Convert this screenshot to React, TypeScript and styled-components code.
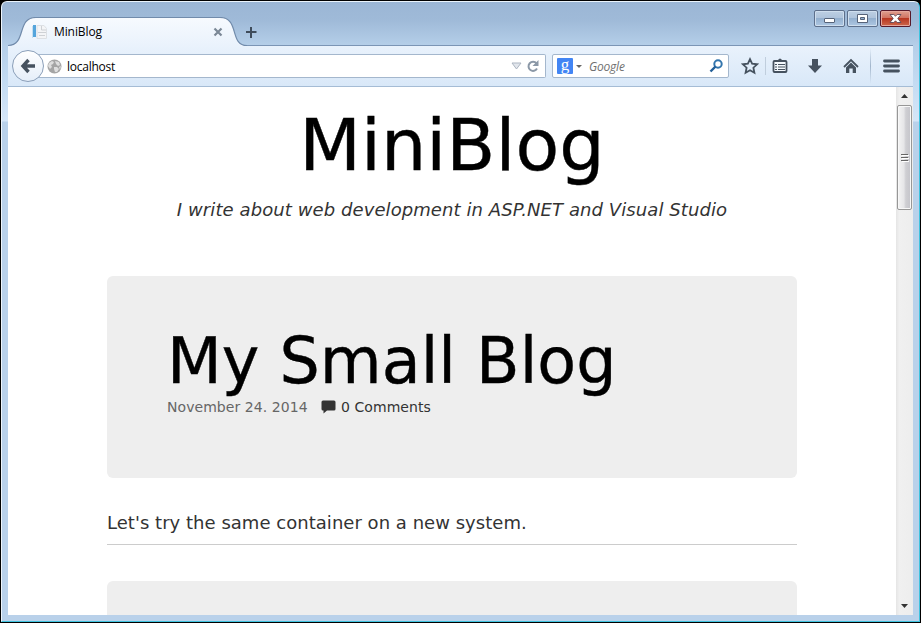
import React from 'react';
import styled, { createGlobalStyle } from 'styled-components';

const GlobalStyle = createGlobalStyle`
  * { box-sizing: border-box; }
  html, body { margin: 0; padding: 0; overflow: hidden; background: #000; }
  svg { display: block; flex: none; }
`;

const Desktop = styled.div`
  width: 921px;
  height: 623px;
  padding: 1px;
  background: #000;
`;

const Window = styled.div`
  width: 919px;
  height: 621px;
  display: flex;
  flex-direction: column;
  padding: 0 6px 6px;
  border: 1px solid #3fc3df;
  border-top-color: #eaf3fb;
  border-left-color: #eef5fc;
  border-radius: 6px 6px 0 0;
  background: linear-gradient(#9bb6d5 0, #9fbad8 18px, #b5cfe9 44px, #c3dbf2 80px, #d5e6f8 119px, #b9d1ea 120px, #b9d1ea 100%);
  font-family: 'Open Sans', 'Noto Sans', sans-serif;
`;

const TitleBar = styled.header`
  height: 44px;
  flex: none;
  display: flex;
  border-bottom: 1px solid #7b95b5;
`;

const Tab = styled.div`
  position: relative;
  width: 238px;
  height: 44px;
  padding: 16px 0 0 24px;
  display: flex;
`;

const TabShape = styled.svg`
  position: absolute;
  left: 0;
  top: 15px;
`;

const TabContent = styled.div`
  position: relative;
  width: 191px;
  height: 28px;
  display: flex;
  align-items: center;
`;

const TabTitle = styled.span`
  flex: 1;
  margin-left: 6px;
  font-size: 12px;
  line-height: 16px;
  letter-spacing: -0.1px;
  color: #000;
`;

const NewTab = styled.div`
  padding: 25px 0 0 0;
  flex: 1;
`;

const WindowControls = styled.div`
  display: flex;
  gap: 2px;
  padding: 8px 2px 0 0;
`;

const ControlButton = styled.div<{ $danger?: boolean }>`
  width: 31px;
  height: 17px;
  display: flex;
  align-items: center;
  justify-content: center;
  border: 1px solid ${p => (p.$danger ? '#57192a' : '#5d6f8b')};
  border-radius: 2px;
  box-shadow: inset 0 0 0 1px ${p => (p.$danger ? '#e5a79d' : '#cfdeee')};
  background: ${p => p.$danger
    ? 'linear-gradient(#dfa090 0, #d0705f 48%, #b83722 50%, #cd674b 100%)'
    : 'linear-gradient(#bdcfe3 0, #aec3db 48%, #94b0cf 50%, #adc7e2 100%)'};
`;

const Toolbar = styled.nav`
  height: 41px;
  flex: none;
  display: flex;
  align-items: center;
  border-bottom: 1px solid #a5bcd5;
  background: linear-gradient(#e9f2fc, #d9e8f8);
`;

const BackButton = styled.div`
  position: relative;
  z-index: 1;
  width: 32px;
  height: 32px;
  margin-left: 4px;
  flex: none;
  display: flex;
  align-items: center;
  justify-content: center;
  border: 1px solid #8b9fb9;
  border-radius: 50%;
  background: linear-gradient(#fff, #e5eef9);
`;

const Field = styled.div<{ $width: number }>`
  width: ${p => p.$width}px;
  height: 24px;
  flex: none;
  display: flex;
  align-items: center;
  border: 1px solid #a4b7cd;
  border-radius: 2px;
  background: #fff;
`;

const AddressField = styled(Field)`
  margin-left: -6px;
  margin-right: 6px;
  padding: 0 5px 0 9px;
  border-left: 0;
  border-radius: 0 2px 2px 0;
`;

const SearchField = styled(Field)`
  padding: 0 5px 0 4px;
`;

const Address = styled.span`
  flex: 1;
  margin-left: 5px;
  padding-top: 2px;
  font-size: 12px;
  line-height: 16px;
  letter-spacing: -0.25px;
`;

const Engine = styled.span`
  width: 16px;
  height: 16px;
  display: flex;
  align-items: center;
  justify-content: center;
  border-radius: 1px;
  background: #4285f4;
  color: #fff;
  font: 17px/14px 'Liberation Serif', serif;
  padding-bottom: 3px;
`;

const Placeholder = styled.span`
  flex: 1;
  margin-left: 7px;
  padding-top: 2px;
  color: #707070;
  font-size: 12px;
  line-height: 16px;
  font-style: italic;
  letter-spacing: -0.2px;
`;

const Actions = styled.div`
  display: flex;
  align-items: center;
  margin-left: 12px;
`;

const Action = styled.div<{ $width: number }>`
  width: ${p => p.$width}px;
`;

const Divider = styled.div<{ $tall?: boolean }>`
  width: 1px;
  height: ${p => (p.$tall ? 36 : 18)}px;
  margin-right: ${p => (p.$tall ? 12 : 6)}px;
  background: ${p => (p.$tall ? 'linear-gradient(transparent, #a1b5cb, transparent)' : '#c0cedd')};
`;

const Viewport = styled.div`
  flex: 1;
  min-height: 0;
  display: flex;
  background: #fff;
`;

const Page = styled.main`
  flex: 1;
  height: 528px;
  overflow: hidden;
  padding: 0 99px 0 99px;
  font-family: 'DejaVu Sans', Verdana, sans-serif;
  color: #333;
`;

const SiteHeader = styled.header`
  height: 189px;
  text-align: center;
  white-space: nowrap;
`;

const SiteTitle = styled.h1`
  margin: 0;
  padding-top: 17px;
  font-size: 71.5px;
  line-height: 84px;
  font-weight: 400;
  letter-spacing: 0.1px;
  color: #000;
  -webkit-text-stroke: 0.4px #000;
`;

const Tagline = styled.p`
  margin: 10px 0 0;
  font-size: 18px;
  line-height: 24px;
  font-style: italic;
  letter-spacing: 0.085px;
`;

const Card = styled.section`
  height: 202px;
  padding: 49px 60px 0;
  border-radius: 6px;
  background: #eee;
`;

const PostTitle = styled.h2`
  margin: 0;
  font-size: 63.5px;
  line-height: 73px;
  font-weight: 400;
  letter-spacing: 0;
  white-space: nowrap;
  color: #000;
  -webkit-text-stroke: 0.4px #000;
`;

const Meta = styled.div`
  display: flex;
  align-items: center;
  height: 18px;
  font-size: 14px;
  line-height: 18px;
  letter-spacing: 0.06px;
`;

const PostDate = styled.time`
  width: 154px;
  color: #666;
`;

const Comments = styled.span`
  margin-left: 5px;
`;

const Excerpt = styled.p`
  height: 67px;
  margin: 0 0 36px;
  padding-top: 33px;
  font-size: 18px;
  line-height: 24px;
  letter-spacing: 0.03px;
  border-bottom: 1px solid #ccc;
`;

const ScrollBar = styled.aside`
  width: 17px;
  height: 528px;
  display: flex;
  flex-direction: column;
  align-items: flex-start;
  background: linear-gradient(90deg, #e5e5e5, #f0f0f0 20%, #ededed);
`;

const ScrollArrow = styled.div`
  width: 17px;
  height: 18px;
  flex: none;
  display: flex;
  align-items: center;
  justify-content: center;
`;

const Thumb = styled.div`
  width: 15px;
  height: 105px;
  margin-left: 1px;
  display: flex;
  flex: none;
  align-items: center;
  justify-content: center;
  border: 1px solid #979797;
  border-radius: 2px;
  box-shadow: inset 0 0 0 1px #f8f8f8;
  background: linear-gradient(90deg, #f4f4f4 0, #e6e6e8 45%, #cfcfd3 60%, #c4c4ca 100%);
`;

const Spacer = styled.div`
  flex: 1;
`;

const ink = '#46525f';

const PageIcon = () => (
  <svg width="16" height="16" viewBox="0 0 16 16">
    <path d="M5 1.500h7l2.500 3v10H5z" fill="#f4f5f7" stroke="#dde0e4" />
    <path d="M9.500 2v4h4.500M6 8.500h8M7 11.500h6" fill="none" stroke="#ced1d5" />
    <path d="M1 1h3v12H1z" fill="#55a5dc" /><path d="M0 2h1v12H0z" fill="#c4e0f2" />
  </svg>
);

const GlobeIcon = () => (
  <svg width="15" height="15" viewBox="0 0 15 15">
    <circle cx="7.5" cy="7.5" r="7" fill="#a5a5a5" />
    <path d="M2 4l3-2 2 1-1 2-2 1 1 2-2 2-2-3zM8 2l4 1 1 3-2 1-2-2zM7 8l3 0 2 2-2 3-2 0-1-3zM12 8l2-1-1 4z" fill="#dedede" />
  </svg>
);

const MinimizeIcon = () => (
  <svg width="13" height="13"><rect x="1.5" y="6.5" width="10" height="4" rx=".5" fill="#fff" stroke="#566379" /></svg>
);
const MaximizeIcon = () => (
  <svg width="13" height="13"><path d="M1.5 2.5h10v8h-10zM4.5 5.5v2h4v-2z" fillRule="evenodd" fill="#fff" stroke="#566379" /></svg>
);
const CloseIcon = () => (
  <svg width="13" height="13"><path d="M1 2.500h3.800l1.700 1.700 1.700-1.700H12L8.800 6.500l3.200 4H8.200L6.500 8.800l-1.700 1.700H1l3.200-4z" fill="#fff" stroke="#5e4857" strokeWidth=".9" /></svg>
);

const StarIcon = () => (
  <svg width="18" height="18"><path d="M9 2.200l2.100 4.500 5 .6-3.700 3.400 1 5L9 13.200l-4.400 2.500 1-5-3.700-3.400 5-.6z" fill="none" stroke={ink} strokeWidth="1.8" /></svg>
);
const ListIcon = () => (
  <svg width="16" height="18">
    <path d="M2.500 4h11q1 0 1 1v9q0 1-1 1h-11q-1 0-1-1V5q0-1 1-1z" fill="#f3f8fd" stroke={ink} strokeWidth="1.800" />
    <path d="M4 5V3.500l2-.5q2-3 4 0l2 .5V5z" fill={ink} />
    <path d="M3 7.500h2M3 10h2M3 12.500h2M6 7.500h7M6 10h7M6 12.500h7" stroke={ink} strokeWidth="1.2" />
  </svg>
);
const DownloadIcon = () => (
  <svg width="16" height="18"><path d="M5 2h6v6.500h4L8 16 1 8.500h4z" fill={ink} /></svg>
);
const HomeIcon = () => (
  <svg width="16" height="18">
    <path d="M1 10l7-7 7 7" fill="none" stroke={ink} strokeWidth="1.8" />
    <path d="M3 10.500l5-5 5 5V16H9.700v-4.500H6.300V16H3z" fill={ink} />
  </svg>
);
const MenuIcon = () => (
  <svg width="17" height="16"><path d="M1.500 3h14M1.500 8h14M1.500 13h14" stroke={ink} strokeWidth="2.800" strokeLinecap="round" /></svg>
);

export default function App() {
  return (
    <Desktop>
      <GlobalStyle />
      <Window>
        <TitleBar>
          <Tab>
            <TabShape width="239" height="30" viewBox="0 0 239 30">
              <defs>
                <linearGradient id="tabFill" x1="0" y1="0" x2="0" y2="1">
                  <stop offset="0" stopColor="#f7fafe" /><stop offset="1" stopColor="#e9f2fc" />
                </linearGradient>
              </defs>
              <path d="M0 28.500C19 28.500 8 .5 28 .5H212C232 .5 221 28.500 239 28.500V30H0z" fill="url(#tabFill)" />
              <path d="M0 28.500C19 28.500 8 .5 28 .5H212C232 .5 221 28.500 239 28.500" fill="none" stroke="#718bab" strokeWidth="1.2" />
            </TabShape>
            <TabContent>
              <PageIcon />
              <TabTitle>MiniBlog</TabTitle>
              <svg width="10" height="10"><path d="M1.500 1.500l7 7M8.500 1.500l-7 7" stroke="#7b8896" strokeWidth="2.200" /></svg>
            </TabContent>
          </Tab>
          <NewTab>
            <svg width="11" height="11"><path d="M5 0v11M0 5h10.500" stroke="#3f4c5b" strokeWidth="2" /></svg>
          </NewTab>
          <WindowControls>
            <ControlButton><MinimizeIcon /></ControlButton>
            <ControlButton><MaximizeIcon /></ControlButton>
            <ControlButton $danger><CloseIcon /></ControlButton>
          </WindowControls>
        </TitleBar>
        <Toolbar>
          <BackButton>
            <svg width="16" height="16"><path d="M8.500 2L3 8l5.500 6M3 8h12" fill="none" stroke={ink} strokeWidth="3.400" /></svg>
          </BackButton>
          <AddressField $width={508}>
            <GlobeIcon />
            <Address>localhost</Address>
            <svg width="34" height="16">
              <path d="M6 5h9l-4.500 6z" fill="#e2e6ec" stroke="#acb5c1" />
              <path d="M30.500 5.500A4.500 4.500 0 1 0 31 10.500" fill="none" stroke="#8b98a7" strokeWidth="2" />
              <path d="M32.500 2v6h-6z" fill="#8b98a7" />
            </svg>
          </AddressField>
          <SearchField $width={177}>
            <Engine>g</Engine>
            <svg width="9" height="5"><path d="M3 1h6L6 4z" fill="#666" /></svg>
            <Placeholder>Google</Placeholder>
            <svg width="14" height="14"><circle cx="9" cy="5" r="3.700" fill="none" stroke="#3275ad" strokeWidth="2" /><path d="M6.500 7.500l-5 5" stroke="#235f98" strokeWidth="2.400" /></svg>
          </SearchField>
          <Actions>
            <Action $width={24}><StarIcon /></Action>
            <Divider />
            <Action $width={35}><ListIcon /></Action>
            <Action $width={36}><DownloadIcon /></Action>
            <Action $width={27}><HomeIcon /></Action>
            <Divider $tall />
            <MenuIcon />
          </Actions>
        </Toolbar>
        <Viewport>
          <Page>
            <SiteHeader>
              <SiteTitle>MiniBlog</SiteTitle>
              <Tagline>I write about web development in ASP.NET and Visual Studio</Tagline>
            </SiteHeader>
            <Card>
              <PostTitle>My Small Blog</PostTitle>
              <Meta>
                <PostDate>November 24. 2014</PostDate>
                <svg width="15" height="14"><path d="M2 .5h11q1.500 0 1.500 1.500v7q0 1.500-1.500 1.500H6L2.500 13.500v-3H2Q.5 10.500 .5 9V2Q.5 .5 2 .5z" fill="#333" /></svg>
                <Comments>0 Comments</Comments>
              </Meta>
            </Card>
            <Excerpt>Let's try the same container on a new system.</Excerpt>
            <Card />
          </Page>
          <ScrollBar>
            <ScrollArrow><svg width="7" height="4"><path d="M0 4l3.500-4L7 4z" fill="#333" /></svg></ScrollArrow>
            <Thumb><svg width="8" height="9"><path d="M0 1.500h7M0 4.500h7M0 7.500h7" stroke="#666" /><path d="M1 2.500h7M1 5.500h7M1 8.500h7" stroke="#fff" /></svg></Thumb>
            <Spacer />
            <ScrollArrow><svg width="7" height="4"><path d="M0 0l3.500 4L7 0z" fill="#333" /></svg></ScrollArrow>
          </ScrollBar>
        </Viewport>
      </Window>
    </Desktop>
  );
}
